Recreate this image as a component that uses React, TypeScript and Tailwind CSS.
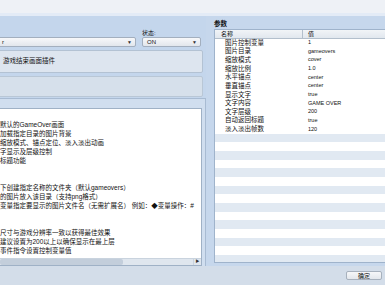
import React from 'react';

const FONT = { fontFamily: '"Liberation Sans", "Noto Sans CJK SC", sans-serif' };

const PARAMS: [string, string][] = [
  ['图片控制变量', '1'],
  ['图片目录', 'gameovers'],
  ['缩放模式', 'cover'],
  ['缩放比例', '1.0'],
  ['水平锚点', 'center'],
  ['垂直锚点', 'center'],
  ['显示文字', 'true'],
  ['文字内容', 'GAME OVER'],
  ['文字层级', '200'],
  ['自动返回标题', 'true'],
  ['淡入淡出帧数', '120'],
];

const HELP: string[] = [
  '默认的GameOver画面',
  '加载指定目录的图片背景',
  '缩放模式、锚点定位、淡入淡出动画',
  '字显示及层级控制',
  '标题功能',
  '',
  '',
  '下创建指定名称的文件夹（默认gameovers）',
  '的图片放入该目录（支持png格式）',
  '变量指定要显示的图片文件名（无需扩展名） 例如：◆变量操作：#',
  '',
  '',
  '尺寸与游戏分辨率一致以获得最佳效果',
  '建议设置为200以上以确保显示在最上层',
  '事件指令设置控制变量值',
];

const Dropdown: React.FC<{ text: string; className: string }> = ({ text, className }) => (
  <div
    className={`h-[10px] flex items-center justify-between rounded-[2px] border border-[#a3afbe] bg-gradient-to-b from-[#f7f8fa] to-[#e2e6ec] pl-[4px] pr-[3px] ${className}`}
  >
    <span className="text-[6px] leading-none text-[#111]">{text}</span>
    <span className="text-[5px] leading-none text-[#333]">▼</span>
  </div>
);

const App: React.FC = () => {
  const emptyRows = Array.from({ length: 16 }, (_, i) => PARAMS.length + i);

  return (
    <div style={FONT} className="w-[385px] h-[285px] overflow-hidden flex flex-col bg-[#cddaea] text-[#111]">
      {/* top strip */}
      <div className="h-[13px] bg-[#eef1f6]" />
      <div className="h-[3px] bg-[#e3ebf6]" />

      <div className="flex h-[250px]">
        {/* left column */}
        <div className="w-[206px] flex flex-col bg-[#c4d6ec]">
          <div className="h-[21px] flex items-end pb-[1px]">
            <span className="ml-[142px] text-[6px] leading-none">状态:</span>
          </div>
          <div className="flex gap-[6px] items-center">
            <Dropdown text="r" className="w-[139px] -ml-[3px]" />
            <Dropdown text="ON" className="w-[59px]" />
          </div>
          <div className="mt-[3px] h-[23px] -ml-[3px] w-[206px] rounded-[2px] border border-[#b3c2d3] bg-[#dde5ef] flex items-center overflow-hidden">
            <span className="ml-[5px] text-[6.5px] leading-none whitespace-nowrap">游戏结束画面插件</span>
          </div>
          <div className="mt-[3px] h-[21px] -ml-[3px] w-[206px] rounded-[2px] border border-[#b9c7d6] bg-[#d6e0eb]" />
          <div className="mt-[1px] flex-1 border-r border-t border-[#a8bbd2] bg-[#d0deef] pt-[9px] pr-[3px] flex flex-col">
            <div className="flex-1 flex flex-col border-r border-b border-t border-[#9fb1c6] bg-white overflow-hidden">
              <div className="flex-1 pt-[11px] overflow-hidden">
                {HELP.map((line, i) => (
                  <div key={i} className="h-[9px] text-[6.5px] leading-[9px] whitespace-nowrap overflow-hidden">
                    {line}
                  </div>
                ))}
              </div>
              <div className="h-[7px] flex items-center bg-[#dfe6ee] border-t border-[#c9d3de]">
                <div className="w-[123px] h-[6px] rounded-[2px] bg-[#c3cedb]" />
                <div className="flex-1" />
                <div className="w-[8px] h-[6px] flex items-center justify-center text-[4px] text-[#333] border-l border-[#c9d3de]">
                  ▶
                </div>
              </div>
            </div>
          </div>
        </div>

        {/* right column */}
        <div className="flex-1 flex flex-col pl-[8px] pb-[3px] bg-[#c6d7ec]">
          <div className="h-[13px] flex items-end pb-[2px]">
            <span className="text-[6.5px] leading-none font-bold">参数</span>
          </div>
          <div className="flex-1 border-l border-t border-b border-[#9fb3cb] bg-white overflow-hidden">
            <div className="h-[8.5px] flex bg-gradient-to-b from-[#f1f4f7] to-[#e1e7ee] border-b border-[#b3bfcc]">
              <div className="w-[88px] pl-[6px] border-r border-[#b3bfcc] text-[6px] leading-[8px]">名称</div>
              <div className="pl-[5px] text-[6px] leading-[8px]">值</div>
            </div>
            {PARAMS.map(([name, value]) => (
              <div key={name} className="h-[8.67px] flex items-center">
                <div className="w-[88px] pl-[10px] text-[6.5px] leading-none whitespace-nowrap">{name}</div>
                <div className="pl-[5px] text-[5.5px] leading-none whitespace-nowrap">{value}</div>
              </div>
            ))}
            {emptyRows.map((i) => (
              <div key={i} className={`h-[8.67px] ${i % 2 === 1 ? 'bg-[#e1e9f2]' : 'bg-white'}`} />
            ))}
          </div>
        </div>
      </div>

      {/* bottom bar */}
      <div className="flex-1 bg-[#d3dde9] flex items-start justify-end pt-[5px] pr-[3px]">
        <button className="w-[36px] h-[9px] rounded-[2px] border border-[#a7b1bd] bg-gradient-to-b from-[#f6f7f9] to-[#e3e7ec] text-[6px] leading-none flex items-center justify-center">
          确定
        </button>
      </div>
    </div>
  );
};

export default App;
